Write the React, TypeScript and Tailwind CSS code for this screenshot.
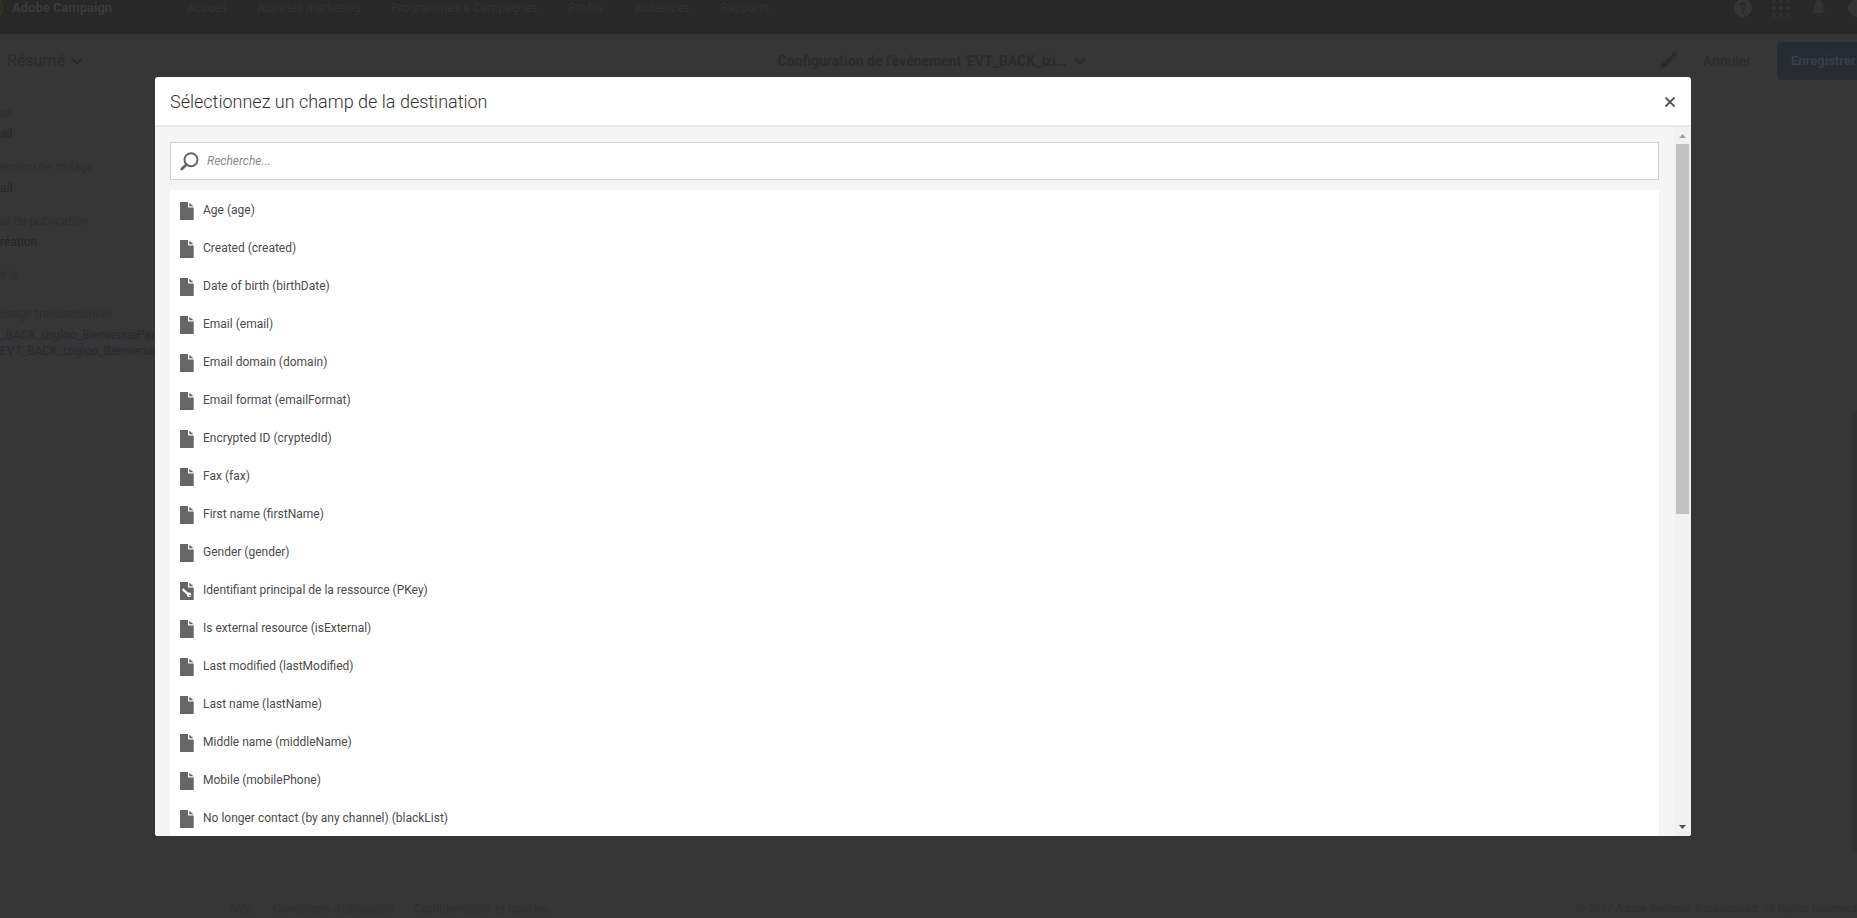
import React from "react";

type Field = { label: string; key?: boolean };

const FIELDS: Field[] = [
  { label: "Age (age)" },
  { label: "Created (created)" },
  { label: "Date of birth (birthDate)" },
  { label: "Email (email)" },
  { label: "Email domain (domain)" },
  { label: "Email format (emailFormat)" },
  { label: "Encrypted ID (cryptedId)" },
  { label: "Fax (fax)" },
  { label: "First name (firstName)" },
  { label: "Gender (gender)" },
  { label: "Identifiant principal de la ressource (PKey)", key: true },
  { label: "Is external resource (isExternal)" },
  { label: "Last modified (lastModified)" },
  { label: "Last name (lastName)" },
  { label: "Middle name (middleName)" },
  { label: "Mobile (mobilePhone)" },
  { label: "No longer contact (by any channel) (blackList)" },
];

function FileIcon({ withKey }: { withKey?: boolean }) {
  return (
    <svg className="mt-0.5 h-[18px] w-3.5 shrink-0" viewBox="0 0 14 18" aria-hidden="true">
      <path d="M0 0h8v5.500h5.700V18H0z" fill="#666" />
      <path d="M9.300 0.800l4.200 3.400H9.300z" fill="#666" />
      {withKey && (
        <g>
          <path d="M2.5 7l6 5.2" stroke="#fff" strokeWidth="2" />
          <path d="M3 9.2l1.3-1.2M5 11l1.3-1.2" stroke="#fff" strokeWidth="1.2" />
          <circle cx="9" cy="12.8" r="2.4" fill="#fff" />
          <circle cx="9.8" cy="13.5" r="0.8" fill="#666" />
        </g>
      )}
    </svg>
  );
}

function Chevron() {
  return (
    <svg className="h-2 w-3 shrink-0" viewBox="0 0 12 8" fill="none" stroke="currentColor" strokeWidth="2" aria-hidden="true">
      <path d="M1 1.5l5 5 5-5" />
    </svg>
  );
}

function TopBar() {
  return (
    <header className="flex h-[34px] shrink-0 items-start overflow-hidden bg-[#282828] text-xs leading-4 text-[#323232]">
      <svg className="-ml-4 mr-2 -mt-0.5 size-5 shrink-0" viewBox="0 0 20 20" aria-hidden="true">
        <circle cx="10" cy="10" r="8.5" fill="none" stroke="#35371f" strokeWidth="1.5" />
      </svg>
      <span className="w-[175px] shrink-0 text-[13px] leading-4 font-bold text-[#3b3b3b]">Adobe Campaign</span>
      <nav className="flex gap-[31px]">
        <a href="#accueil">Accueil</a>
        <a href="#activites">Activités marketing</a>
        <a href="#programmes">Programmes &amp; Campagnes</a>
        <a href="#profils">Profils</a>
        <a href="#audiences">Audiences</a>
        <a href="#rapports">Rapports</a>
      </nav>
      <div className="-mr-2.5 ml-auto flex gap-[18px]">
        <button aria-label="Aide" className="-mt-0.5">
          <svg className="size-5" viewBox="0 0 20 20" aria-hidden="true">
            <circle cx="10" cy="10" r="9" fill="#353535" />
            <path d="M7.4 8c0-3.400 5.400-3.200 5.200 0-.1 1.800-2.500 1.800-2.500 4M10.100 13.600v1.800" fill="none" stroke="#282828" strokeWidth="1.8" />
          </svg>
        </button>
        <button aria-label="Applications" className="-mt-0.5">
          <svg className="size-5" viewBox="0 0 20 20" fill="#303030" aria-hidden="true">
            <path d="M1 1h4v4H1zM8 1h4v4H8zM15 1h4v4h-4zM1 8h4v4H1zM8 8h4v4H8zM15 8h4v4h-4zM1 15h4v4H1zM8 15h4v4H8zM15 15h4v4h-4z" />
          </svg>
        </button>
        <button aria-label="Notifications" className="-mt-0.5">
          <svg className="size-5" viewBox="0 0 20 20" fill="#323232" aria-hidden="true">
            <path d="M10 1c1 0 1.500.6 1.500 1.500C14 3.300 14.500 6 14.500 9c0 3 .6 4 2.500 6H3c1.900-2 2.500-3 2.500-6 0-3 .5-5.700 3-6.500C8.500 1.600 9 1 10 1zM8 16.500h4c-.2 2.500-3.800 2.500-4 0z" />
          </svg>
        </button>
        <button aria-label="Profil" className="-mt-0.5">
          <svg className="size-5" viewBox="0 0 20 20" aria-hidden="true">
            <circle cx="10" cy="10" r="9" fill="#353535" />
          </svg>
        </button>
      </div>
    </header>
  );
}

function TitleBar() {
  return (
    <div className="flex shrink-0 items-center pl-[7px] pt-2 text-[#2b2b2b]">
      <button className="flex flex-1 items-center gap-1.5 text-base">
        Résumé <Chevron />
      </button>
      <button className="flex items-center gap-2 text-sm font-bold">
        Configuration de l'événement 'EVT_BACK_izi… <Chevron />
      </button>
      <div className="flex flex-1 items-center justify-end">
        <button aria-label="Modifier" className="mr-[26px]">
          <svg className="size-[18px]" viewBox="0 0 18 18" fill="currentColor" aria-hidden="true">
            <path d="M1 17l1.200-4.500L11.500 3.200l3.300 3.300-9.300 9.300zM12.400 2.300L14.200.5q.9-.7 1.700 0l1.600 1.600q.7.900 0 1.700l-1.800 1.800z" />
          </svg>
        </button>
        <button className="mr-[26px] text-sm">Annuler</button>
        <button className="h-[38px] w-20 rounded-l-sm bg-[#272b33] pl-3.5 text-left text-[13px] font-bold text-[#3b3e44]">
          Enregistrer
        </button>
      </div>
    </div>
  );
}

function Summary() {
  return (
    <dl className="w-40 shrink-0 whitespace-nowrap pt-[25px] text-xs leading-4 text-[#2e2e2e]">
      <dt>ail</dt>
      <dd className="mb-[17px] mt-[5px] text-[#262626]">ail</dd>
      <dt>ension de ciblage</dt>
      <dd className="mb-[17px] mt-[5px] text-[#262626]">ail</dd>
      <dt>ut de publication</dt>
      <dd className="mb-[17px] mt-[5px] text-[#262626]">réation</dd>
      <dt>é le</dt>
      <dd className="h-[23px]" />
      <dt>ssage transactionnel</dt>
      <dd className="mt-[5px] text-[#2a2a33]">
        <a href="#evt-bienvenue" className="block">_BACK_izigloo_BienvenuePar</a>
        <a href="#evt-bienvenue-2" className="block">EVT_BACK_izigloo_Bienvenue</a>
      </dd>
    </dl>
  );
}

function Footer() {
  return (
    <footer className="flex h-[18px] shrink-0 items-center gap-5 pl-[229px] text-xs leading-4 text-[#303030]">
      <a href="#aide">Aide</a>
      <a href="#conditions">Conditions d'utilisation</a>
      <a href="#confidentialite">Confidentialité et cookies</a>
      <span className="ml-auto text-[11px]">© 2017 Adobe Systems Incorporated. All Rights Reserved</span>
    </footer>
  );
}

function FieldDialog() {
  return (
    <section role="dialog" aria-modal="true" aria-labelledby="dialog-title" className="flex min-w-0 flex-1 flex-col overflow-hidden rounded-[3px] bg-white">
      <div className="flex h-[50px] shrink-0 items-center justify-between border-b-2 border-[#e9e9e9] pl-[15px] pr-4 pt-0.5">
        <h1 id="dialog-title" className="text-lg font-light text-[#323232]">
          Sélectionnez un champ de la destination
        </h1>
        <button aria-label="Fermer">
          <svg className="size-2.5" viewBox="0 0 10 10" stroke="#4b4b4b" strokeWidth="1.8" aria-hidden="true">
            <path d="M.5.5l9 9M9.500.5l-9 9" />
          </svg>
        </button>
      </div>
      <div className="flex min-h-0 flex-1 bg-[#f5f5f5]">
        <div className="flex min-w-0 flex-1 flex-col gap-2.5 overflow-hidden px-[15px] pt-[15px]">
          <label className="flex h-[38px] shrink-0 items-center gap-2 border border-[#d0d0d0] bg-white pl-[9px]">
            <svg className="size-[19px] shrink-0" viewBox="0 0 19 19" fill="none" stroke="#666" aria-hidden="true">
              <circle cx="11" cy="7.700" r="6.500" strokeWidth="2" />
              <path d="M6.200 12.700l-4.400 4.300" strokeWidth="2.800" strokeLinecap="round" />
            </svg>
            <input
              type="text"
              aria-label="Recherche"
              placeholder="Recherche..."
              className="h-full min-w-0 flex-1 text-xs italic outline-none placeholder:text-[#8c8c8c]"
            />
          </label>
          <ul className="shrink-0 bg-white">
            {FIELDS.map((f) => (
              <li key={f.label}>
                <button className="flex h-[38px] w-full items-center gap-[9px] pl-2.5 pt-0.5 text-left text-xs text-[#4b4b4b]">
                  <FileIcon withKey={f.key} />
                  {f.label}
                </button>
              </li>
            ))}
          </ul>
        </div>
        <div className="flex w-[17px] shrink-0 flex-col items-center justify-between bg-[#f1f1f1]" aria-hidden="true">
          <div className="flex h-[387px] w-[13px] flex-col items-center">
            <svg className="mb-1.5 mt-[7px] h-[4px] w-[7px] shrink-0" viewBox="0 0 7 4" fill="#a3a3a3">
              <path d="M0 4h7L3.500 0z" />
            </svg>
            <div className="w-full flex-1 bg-[#c1c1c1]" />
          </div>
          <svg className="mb-[7px] h-[4px] w-[7px] shrink-0" viewBox="0 0 7 4" fill="#505050">
            <path d="M0 0h7L3.500 4z" />
          </svg>
        </div>
      </div>
    </section>
  );
}

export default function App() {
  return (
    <div className="relative flex h-screen flex-col overflow-hidden bg-[#363636] font-['Roboto',sans-serif]">
      <TopBar />
      <TitleBar />
      <main className="flex min-h-0 flex-1 items-start justify-between">
        <Summary />
        <div className="mt-[330px] h-[442px] w-[5px] bg-[#323232]" />
      </main>
      <Footer />
      <div className="absolute inset-0 flex pb-[82px] pl-[155px] pr-[166px] pt-[77px]">
        <FieldDialog />
      </div>
    </div>
  );
}
